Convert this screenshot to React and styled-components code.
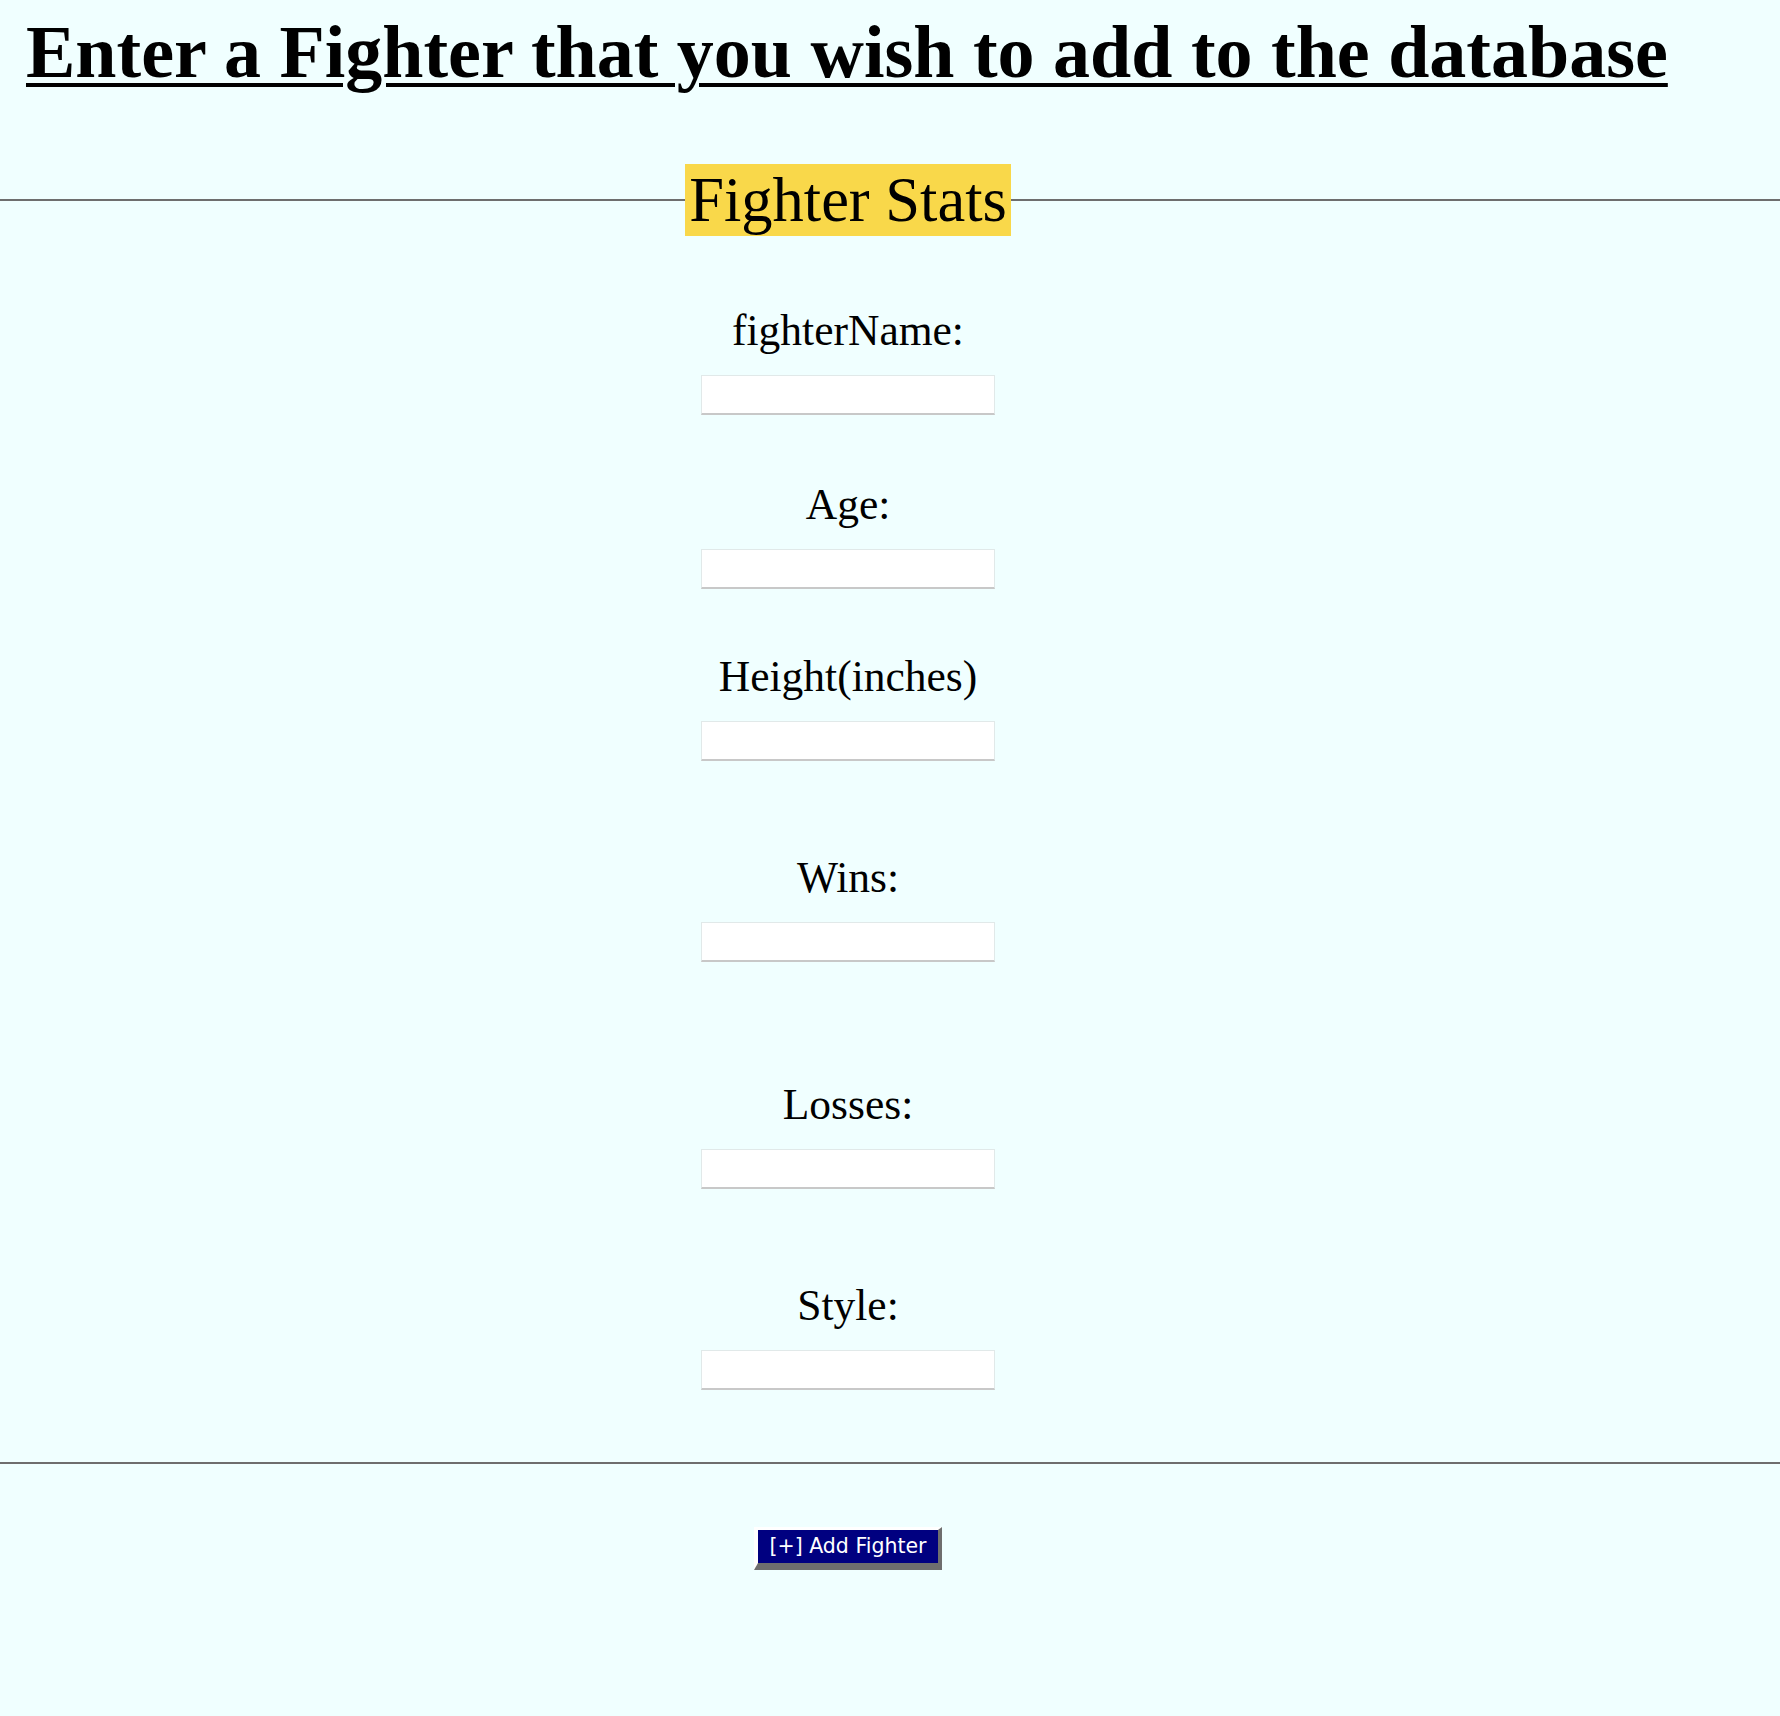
import React from "react";
import styled, { createGlobalStyle } from "styled-components";

const fields = [
  { label: "fighterName:", space: 0 },
  { label: "Age:", space: 64 },
  { label: "Height(inches)", space: 62 },
  { label: "Wins:", space: 91 },
  { label: "Losses:", space: 117 },
  { label: "Style:", space: 91 },
];

const App = () => {
  return (
    <Page>
      <GlobalStyle />
      <Heading>Enter a Fighter that you wish to add to the database</Heading>
      <Form onSubmit={(e) => e.preventDefault()}>
        <Stats>
          <Legend>Fighter Stats</Legend>
          {fields.map((f) => (
            <Field key={f.label}>
              <Label $space={f.space}>{f.label}</Label>
              <Input type="text" />
            </Field>
          ))}
        </Stats>
        <Actions>
          <Button type="submit">[+] Add Fighter</Button>
        </Actions>
      </Form>
    </Page>
  );
};

export default App;

const GlobalStyle = createGlobalStyle`
  html, body {
    margin: 0;
    padding: 0;
    background-color: #f0ffff;
  }
  body {
    font-family: "Liberation Serif", "Times New Roman", serif;
    color: #000;
  }
`;

const Page = styled.div`
  min-height: 1716px;
  background-color: #f0ffff;
  overflow: hidden;
`;

const Heading = styled.h1`
  margin: 10px 0 0;
  padding-left: 26px;
  font-family: "Liberation Serif", "Times New Roman", serif;
  font-size: 74px;
  font-weight: bold;
  line-height: 85px;
  text-decoration: underline;
  text-decoration-thickness: 4px;
  text-underline-offset: 6px;
  white-space: nowrap;
`;

const Form = styled.form`
  margin: 0;
`;

const Stats = styled.fieldset`
  margin: 69px 0 0;
  min-width: 0;
  padding: 69px 84px 72px 0;
  border: none;
  border-top: 2px solid #6e6e6e;
  border-bottom: 2px solid #6e6e6e;
`;

const Legend = styled.legend`
  margin: 0 auto;
  padding: 0 4px;
  background-color: #f9d84a;
  font-size: 62.5px;
  line-height: 72px;
`;

const Field = styled.div`
  display: flex;
  flex-direction: column;
  align-items: center;
`;

const Label = styled.label`
  display: block;
  margin-top: ${({ $space }) => $space}px;
  font-size: 43.5px;
  line-height: 50px;
  text-align: center;
`;

const Input = styled.input`
  display: block;
  box-sizing: border-box;
  width: 294px;
  height: 40px;
  margin: 20px 0 0;
  background-color: #fff;
  border: 1px solid #e1e9e9;
  border-bottom: 2px solid #c8c8c8;
  outline: none;
`;

const Actions = styled.div`
  display: flex;
  justify-content: center;
  padding-right: 84px;
  margin-top: 63px;
`;

const Button = styled.button`
  box-sizing: content-box;
  padding: 0 12px;
  height: 33px;
  background-color: #000080;
  color: #fff;
  font-family: "DejaVu Sans", Verdana, sans-serif;
  font-size: 20.5px;
  line-height: 33px;
  border-style: solid;
  border-width: 3px 4px 7px 4px;
  border-color: #fff #6e6e6e #6e6e6e #fff;
  cursor: pointer;
`;
